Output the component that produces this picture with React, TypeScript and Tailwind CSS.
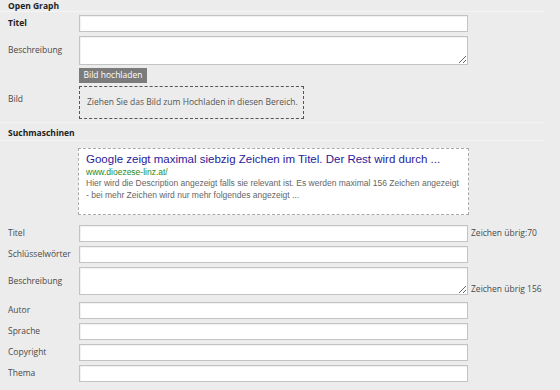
const font = { fontFamily: '"Open Sans", "DejaVu Sans", sans-serif' };

function Field({ label, bold, tall, note, mt = "mt-[4px]" }: { label: string; bold?: boolean; tall?: number; note?: string; mt?: string }) {
  return (
    <div className={`flex ${tall ? "items-stretch" : "items-center"} ${mt}`}>
      <div className={`flex w-[79px] items-center pl-2 ${bold ? "font-bold text-[#222]" : ""}`}>{label}</div>
      {tall ? (
        <textarea readOnly className="block w-[389px] border border-[#c3c3c3] bg-white shadow-[inset_1px_1px_1px_rgba(0,0,0,0.06)] outline-none" style={{ height: tall }} />
      ) : (
        <input readOnly className="block h-[17px] w-[389px] border border-[#c3c3c3] bg-white shadow-[inset_1px_1px_1px_rgba(0,0,0,0.06)] outline-none" />
      )}
      {note && <div className={`pl-[3px] ${tall ? "flex items-end leading-[12px]" : ""}`}>{note}</div>}
    </div>
  );
}

export default function App() {
  return (
    <div className="h-[390px] w-[560px] overflow-hidden bg-[#ececec] text-[8.5px] text-[#4a4a4a]" style={font}>
      <div className="mr-[15px] border-b border-[#f5f5f5] pl-2 text-[8.5px] font-bold leading-[11px] text-[#222]">Open Graph</div>
      <Field label="Titel" bold mt="mt-[3px]" />
      <Field label="Beschreibung" tall={29} />
      <div className="mt-[3px] flex">
        <div className="w-[79px]" />
        <div className="flex h-[15px] w-[68px] items-center justify-center bg-[#7b7b7b] text-white">Bild hochladen</div>
      </div>
      <div className="mt-[3px] flex items-center">
        <div className="w-[79px] pb-[6px] pl-2">Bild</div>
        <div className="flex h-[33px] w-[225px] items-center border border-dashed border-[#555] pl-[7px] text-[#555]">
          Ziehen Sie das Bild zum Hochladen in diesen Bereich.
        </div>
      </div>
      <div className="mr-[15px] mt-[3px] border-t border-[#f3f3f3] pl-2 pt-[4px] font-bold leading-[11px] text-[#222]">Suchmaschinen</div>
      <div className="mr-[15px] mt-[2px] border-t border-[#f3f3f3]" />
      <div className="flex">
        <div className="w-[78px]" />
        <div className="mt-[7px] h-[67px] w-[391px] border border-dashed border-[#aaa] bg-white px-[7px] pt-[3px]" style={{ fontFamily: '"Liberation Sans", Arial, sans-serif' }}>
          <div className="text-[11.5px] leading-[15px] text-[#2a1a99]">Google zeigt maximal siebzig Zeichen im Titel. Der Rest wird durch ...</div>
          <div className="text-[8.5px] leading-[10px] text-[#1f8a1f]">www.dioezese-linz.at/</div>
          <div className="text-[8.5px] leading-[12px] text-[#666]">
            Hier wird die Description angezeigt falls sie relevant ist. Es werden maximal 156 Zeichen angezeigt - bei mehr Zeichen wird nur mehr folgendes angezeigt ...
          </div>
        </div>
      </div>
      <Field label="Titel" note="Zeichen übrig:70" mt="mt-[10px]" />
      <Field label="Schlüsselwörter" />
      <Field label="Beschreibung" tall={28} note="Zeichen übrig 156" />
      <Field label="Autor" mt="mt-[7px]" />
      <Field label="Sprache" />
      <Field label="Copyright" />
      <Field label="Thema" />
    </div>
  );
}
